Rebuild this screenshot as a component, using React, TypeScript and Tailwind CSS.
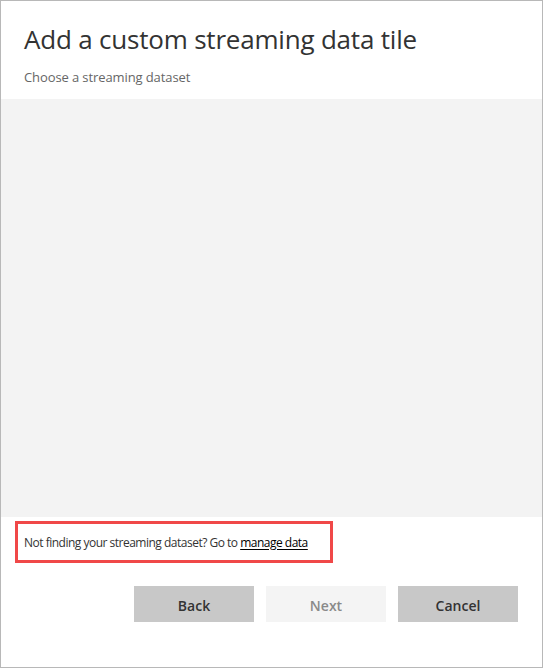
export default function App() {
  const font = { fontFamily: '"Open Sans", "Noto Sans", "Liberation Sans", sans-serif' };
  return (
    <div className="w-[543px] h-[668px] border border-[#b8b8b8] bg-white flex flex-col" style={font}>
      <div className="h-[98px] shrink-0 pl-[23px] pt-[20px]">
        <div className="text-[26px] leading-[36px] text-[#333333] tracking-[-0.2px] whitespace-nowrap">Add a custom streaming data tile</div>
        <div className="text-[13px] leading-[18px] text-[#666666] mt-[11px] tracking-[-0.1px]">Choose a streaming dataset</div>
      </div>
      <div className="h-[418px] shrink-0 bg-[#f3f3f3]" />
      <div className="mt-[4px] ml-[14px] w-[318px] h-[42px] border-[3px] border-[#f04848] flex items-center pl-[6px] pt-[1px]">
        <span className="text-[12px] text-[#333333] whitespace-nowrap tracking-[-0.5px]">
          Not finding your streaming dataset? Go to{" "}
          <span className="underline text-black underline-offset-2">manage data</span>
        </span>
      </div>
      <div className="mt-[23px] flex justify-end gap-[12px] pr-[24px]">
        <button className="w-[120px] h-[36px] bg-[#c8c8c8] text-[14px] font-semibold text-[#333333] pt-[2px]">Back</button>
        <button className="w-[120px] h-[36px] bg-[#f4f4f4] text-[14px] font-semibold text-[#8a8a8a] pt-[2px]">Next</button>
        <button className="w-[120px] h-[36px] bg-[#c8c8c8] text-[14px] font-semibold text-[#333333] pt-[2px]">Cancel</button>
      </div>
    </div>
  );
}
